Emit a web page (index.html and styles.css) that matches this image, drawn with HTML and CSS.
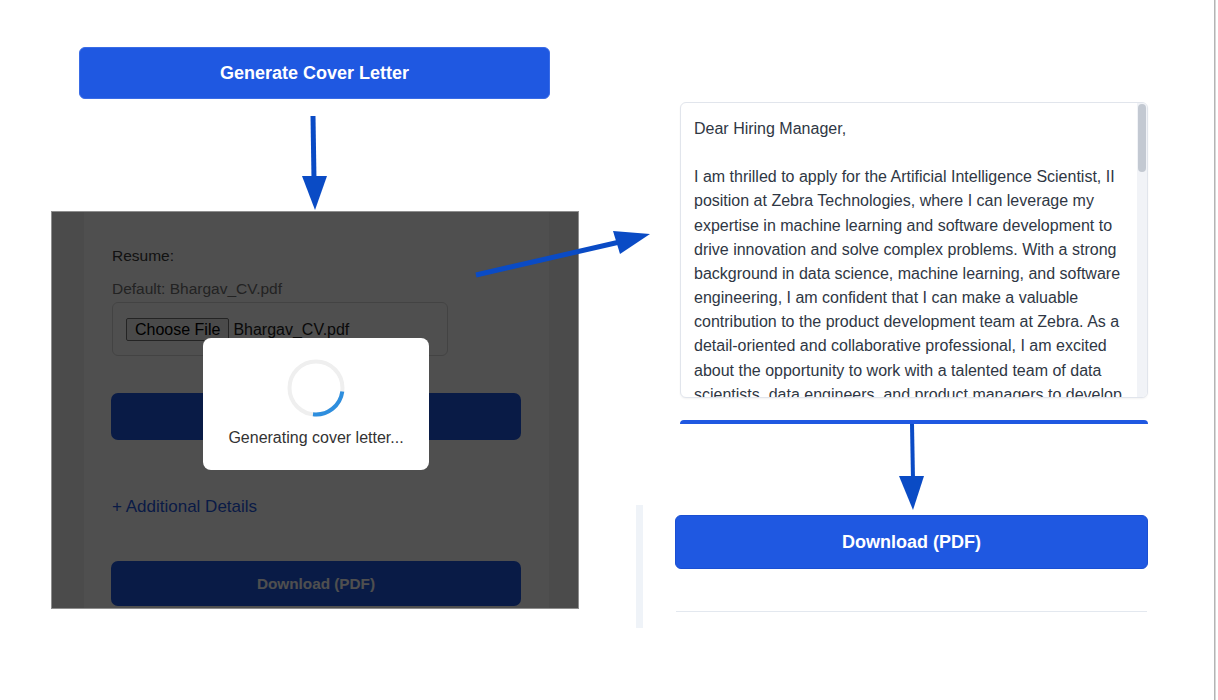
FILE: index.html
```html
<!DOCTYPE html>
<html lang="en">
<head>
<meta charset="utf-8">
<title>Cover Letter Flow</title>
<link rel="stylesheet" href="styles.css">
</head>
<body>
<div class="canvas">
  <button class="gen-btn">Generate Cover Letter</button>

  <div class="shot-left">
    <div class="card">
      <div class="label">Resume:</div>
      <div class="default">Default: Bhargav_CV.pdf</div>
      <div class="file-box">
        <span class="choose">Choose File</span>
        <span class="file-name">Bhargav_CV.pdf</span>
      </div>
      <div class="navy-btn"></div>
      <div class="add-details">+ Additional Details</div>
      <div class="navy-btn dl">Download (PDF)</div>
    </div>
    <div class="overlay"></div>
    <div class="modal">
      <svg class="spinner" width="58" height="58" viewBox="0 0 58 58">
        <circle cx="29" cy="29" r="26.5" fill="none" stroke="#efefef" stroke-width="4"/>
        <path d="M55.3 32.5 A26.5 26.5 0 0 1 26 55.3" fill="none" stroke="#2e8ede" stroke-width="4"/>
      </svg>
      <div class="modal-text">Generating cover letter...</div>
    </div>
  </div>

  <div class="strip"></div>

  <div class="right-col">
    <div class="letter">
      <div class="letter-text">
        <div>Dear Hiring Manager,</div>
        <div>&nbsp;</div>
        <div>I am thrilled to apply for the Artificial Intelligence Scientist, II</div>
        <div>position at Zebra Technologies, where I can leverage my</div>
        <div>expertise in machine learning and software development to</div>
        <div>drive innovation and solve complex problems. With a strong</div>
        <div>background in data science, machine learning, and software</div>
        <div>engineering, I am confident that I can make a valuable</div>
        <div>contribution to the product development team at Zebra. As a</div>
        <div>detail-oriented and collaborative professional, I am excited</div>
        <div>about the opportunity to work with a talented team of data</div>
        <div>scientists, data engineers, and product managers to develop</div>
      </div>
      <div class="scroll-track"><div class="scroll-thumb"></div></div>
    </div>
    <div class="clip-btn"></div>
    <button class="dl-btn">Download (PDF)</button>
    <div class="divider"></div>
  </div>

  <div class="edge"></div>

  <svg class="arrows" width="1218" height="700" viewBox="0 0 1218 700">
    <g fill="#0a4bc5" stroke="#0a4bc5">
      <line x1="313" y1="116" x2="314" y2="180" stroke-width="5"/>
      <polygon points="302,176 327,176 315,210" stroke="none"/>
      <line x1="476" y1="275" x2="624" y2="241" stroke-width="5"/>
      <polygon points="613,231 620,254 650,234" stroke="none"/>
      <line x1="912" y1="424" x2="913" y2="480" stroke-width="4"/>
      <polygon points="899,476 924,476 913,510" stroke="none"/>
    </g>
  </svg>
</div>
</body>
</html>
```

FILE: styles.css
```css
* { box-sizing: border-box; }
html, body { margin: 0; padding: 0; background: #ffffff; }
body { font-family: "Liberation Sans", Arial, Helvetica, sans-serif; }

.canvas {
  position: relative;
  width: 1218px;
  height: 700px;
  overflow: hidden;
  background: #ffffff;
}

.gen-btn {
  position: absolute;
  left: 79px;
  top: 47px;
  width: 471px;
  height: 52px;
  background: #1f58e1;
  border: 1px solid #3a6ce6;
  border-radius: 6px;
  color: #ffffff;
  font-family: "Liberation Sans", Arial, sans-serif;
  font-weight: 700;
  font-size: 18px;
  display: flex;
  align-items: center;
  justify-content: center;
  padding: 1px 0 0 0;
}

/* left screenshot */
.shot-left {
  position: absolute;
  left: 51px;
  top: 211px;
  width: 528px;
  height: 398px;
  border: 1px solid #8e8e8e;
  background: #f0f0f0;
  overflow: hidden;
}
.card {
  margin-left: 31px;
  width: 466px;
  height: 100%;
  background: #ffffff;
  border-left: 1px solid #f3f3f3;
  padding: 34px 28px 0 28px;
  display: flex;
  flex-direction: column;
  align-items: flex-start;
}
.label {
  font-size: 15.5px;
  line-height: 20px;
  color: #3a3a3a;
}
.default {
  margin-top: 13px;
  font-size: 15.5px;
  line-height: 20px;
  color: #707070;
}
.file-box {
  margin-top: 3px;
  width: 336px;
  height: 54px;
  border: 1px solid #d8d8d8;
  border-radius: 6px;
  padding: 15px 13px 0 13px;
  display: flex;
  align-items: flex-start;
}
.choose {
  display: inline-block;
  height: 23px;
  line-height: 21px;
  padding: 0 8px;
  border: 1px solid #767676;
  border-radius: 2px;
  background: #efefef;
  font-size: 16px;
  color: #000;
}
.file-name {
  margin-left: 4px;
  font-size: 16px;
  line-height: 23px;
  color: #222;
}
.navy-btn {
  margin-top: 37px;
  margin-left: -1px;
  width: 410px;
  height: 47px;
  background: #1f58e1;
  border-radius: 7px;
}
.add-details {
  margin-top: 57px;
  font-size: 17px;
  line-height: 20px;
  color: #1f58e1;
}
.navy-btn.dl {
  margin-top: 44px;
  height: 45px;
  display: flex;
  align-items: center;
  justify-content: center;
  font-size: 15.3px;
  font-weight: 700;
  color: #ffffff;
}
.overlay {
  position: absolute;
  inset: 0;
  background: rgba(0, 0, 0, 0.69);
}
.modal {
  position: absolute;
  left: 151px;
  top: 126px;
  width: 226px;
  height: 132px;
  background: #ffffff;
  border-radius: 8px;
  display: flex;
  flex-direction: column;
  align-items: center;
  padding-top: 21px;
}
.spinner { display: block; }
.modal-text {
  margin-top: 11px;
  font-size: 16px;
  line-height: 20px;
  color: #333333;
}

.strip {
  position: absolute;
  left: 636px;
  top: 505px;
  width: 7px;
  height: 123px;
  background: #eff3f8;
}

/* right column */
.right-col {
  position: absolute;
  left: 675px;
  top: 102px;
  width: 473px;
  display: flex;
  flex-direction: column;
  align-items: flex-start;
}
.letter {
  position: relative;
  margin-left: 5px;
  width: 468px;
  height: 296px;
  border: 1px solid #e1e5ec;
  border-radius: 6px;
  box-shadow: 0 1px 2px rgba(0, 0, 0, 0.05);
  background: #ffffff;
  overflow: hidden;
}
.letter-text {
  padding: 14px 0 0 13px;
  font-size: 16px;
  line-height: 24.15px;
  color: #2f3744;
  white-space: nowrap;
}
.scroll-track {
  position: absolute;
  top: 0;
  right: 0;
  width: 10px;
  height: 100%;
  background: #f1f3f7;
}
.scroll-thumb {
  margin: 1px 0 0 1px;
  width: 8px;
  height: 68px;
  border-radius: 4px;
  background: #c3c9d2;
}
.clip-btn {
  margin-top: 22px;
  margin-left: 5px;
  width: 468px;
  height: 4px;
  background: #1f58e1;
  border-radius: 4px 4px 0 0;
}
.dl-btn {
  margin-top: 91px;
  width: 473px;
  height: 54px;
  background: #1f58e1;
  border: 1px solid #1a4fd2;
  border-radius: 6px;
  color: #ffffff;
  font-family: "Liberation Sans", Arial, sans-serif;
  font-weight: 700;
  font-size: 18px;
  display: flex;
  align-items: center;
  justify-content: center;
  padding: 0;
}
.divider {
  margin-top: 42px;
  margin-left: 1px;
  width: 471px;
  height: 1px;
  background: #e3e8ef;
}

.edge {
  position: absolute;
  left: 1214px;
  top: 0;
  width: 2px;
  height: 700px;
  background: #b4b4b4;
  border-right: 1px solid #d8d8d8;
}

.arrows {
  position: absolute;
  left: 0;
  top: 0;
  pointer-events: none;
}
```
